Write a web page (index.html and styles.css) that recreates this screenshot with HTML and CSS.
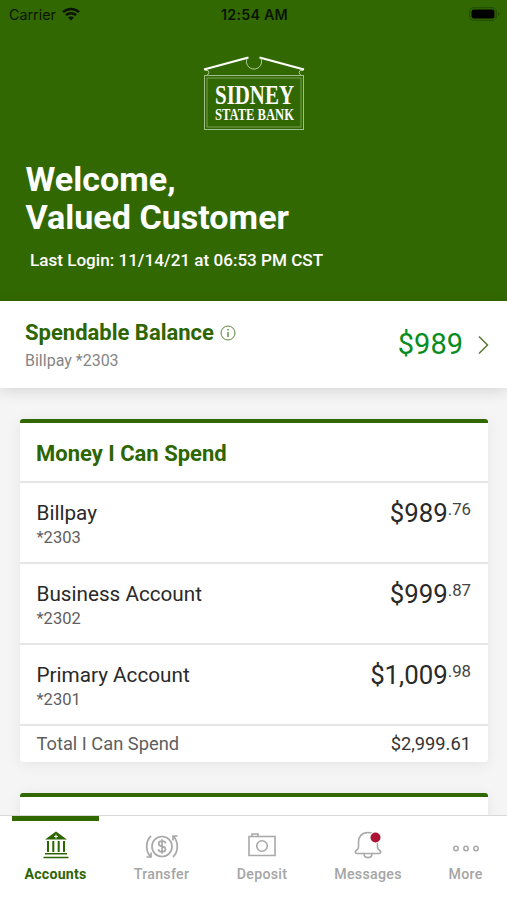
FILE: index.html
```html
<!DOCTYPE html>
<html lang="en">
<head>
<meta charset="utf-8">
<title>Sidney State Bank</title>
<link rel="stylesheet" href="styles.css">
</head>
<body>
<div class="app">
  <header class="hero">
    <div class="status">
      <div class="carrier"><span>Carrier</span>
        <svg width="18" height="14" viewBox="0 0 18 14" fill="none" stroke="#0b1400" stroke-width="2.500"><path d="M1 5.200C5.500 .9 12.500 .9 17 5.200M3.900 8.200C6.800 5.500 11.200 5.500 14.100 8.200"/><path d="M9 13.600 6.100 10.600C7.700 9.100 10.300 9.100 11.900 10.600Z" fill="#0b1400" stroke="none"/></svg>
      </div>
      <div class="time">12:54 AM</div>
      <svg class="battery" width="31" height="14" viewBox="0 0 31 14"><rect x=".7" y=".7" width="26.600" height="12.600" rx="4" fill="none" stroke="#255000" stroke-width="1.300"/><rect x="2.500" y="2.500" width="23" height="9" rx="2.500" fill="#000"/><path d="M29 5v4q1.500-.5 1.500-2t-1.500-2" fill="#255000"/></svg>
    </div>
    <svg class="logo" width="104" height="78" viewBox="0 0 104 78">
      <g fill="none" stroke="#fff">
        <path d="M2 15.500 46.500 3.500M57.500 3.500 102 15.500" stroke-width="2.200"/>
        <path d="M45 4.500A7.600 7.600 0 1 0 59 4.500M3 16.500h3q2 2-.5 4.500M101 16.500h-3q-2 2 .5 4.500" stroke="#b4cda0"/>
        <rect x="2.500" y="21.500" width="99" height="54" stroke="#a0be87"/>
        <rect x="5" y="24" width="94" height="49" stroke="#8aad6c" stroke-width=".8"/>
      </g>
      <g fill="#fff" font-family="Liberation Serif, serif" font-weight="700">
        <text x="13" y="49.500" font-size="27" textLength="79" lengthAdjust="spacingAndGlyphs">SIDNEY</text>
        <text x="13" y="66" font-size="16.500" textLength="79" lengthAdjust="spacingAndGlyphs">STATE BANK</text>
      </g>
    </svg>
    <h1>Welcome,<br>Valued Customer</h1>
    <p class="login">Last Login: 11/14/21 at 06:53 PM CST</p>
  </header>

  <section class="spendable">
    <div class="spend-info">
      <h2>Spendable Balance
        <svg width="16" height="16" viewBox="0 0 16 16" fill="none" stroke="#5c8738"><circle cx="8" cy="8" r="7"/><path d="M8 7v5M8 4v1.500" stroke-width="1.400"/></svg>
      </h2>
      <p>Billpay *2303</p>
    </div>
    <div class="spend-amount">$989</div>
    <svg class="chevron" width="11" height="20" viewBox="0 0 11 20" fill="none" stroke="#5a7832" stroke-width="1.500"><path d="M1 1.500 9.500 10 1 18.500"/></svg>
  </section>

  <main>
    <section class="card">
      <h2>Money I Can Spend</h2>
      <div class="row"><div><div class="name">Billpay</div><div class="num">*2303</div></div><div class="amount">$989<span>.76</span></div></div>
      <div class="row"><div><div class="name">Business Account</div><div class="num">*2302</div></div><div class="amount">$999<span>.87</span></div></div>
      <div class="row"><div><div class="name">Primary Account</div><div class="num">*2301</div></div><div class="amount">$1,009<span>.98</span></div></div>
      <div class="total"><span>Total I Can Spend</span><b>$2,999.61</b></div>
    </section>
    <section class="card next"></section>
  </main>

  <nav>
    <a class="tab accounts">
      <svg width="28" height="30" viewBox="0 0 28 30"><path d="M3 9.500 14 1.500 25 9.500Z" fill="#2d6500"/><path d="M14 4.500v4M12 6.500h4" stroke="#fff"/><path d="M6 11v11M11.300 11v11M16.700 11v11M22 11v11" stroke="#2d6500" stroke-width="2"/><path d="M3 23.700H25M1.500 27.500H26.500" stroke="#2d6500" stroke-width="1.600"/></svg>
      <span>Accounts</span></a>
    <a class="tab transfer">
      <svg width="34" height="30" viewBox="0 0 34 30" fill="none" stroke="#a8a8a8" stroke-width="1.700"><circle cx="17" cy="16.500" r="10"/><path d="M20.500 13.500C20.500 11.500 18.800 11.200 17 11.200C12.500 11.200 12.500 15.700 17 16.400C21.800 17.100 21.500 21.800 17 21.800C15 21.800 13.500 21 13.500 19.200M17 9.300v14.400"/><path d="M6 6C.5 11 .3 20.500 5.500 27M1.500 27H6V22.500M28 27C33.500 22 33.700 12.500 28.500 6M32.500 6H28V10.500"/></svg>
      <span>Transfer</span></a>
    <a class="tab deposit">
      <svg width="30" height="30" viewBox="0 0 30 30" fill="none" stroke="#a8a8a8" stroke-width="1.600"><path d="M2 6.500H28V25.500H2ZM5 6V4H11V6"/><circle cx="15" cy="16" r="5.300"/></svg>
      <span>Deposit</span></a>
    <a class="tab messages">
      <svg width="30" height="30" viewBox="0 0 30 30"><path d="M15 2.500C8.500 2.500 5.500 7 5.500 12V17Q5.500 19 3.300 20.500C1.400 22 2.300 23.500 4 23.500H26C27.700 23.500 28.600 22 26.700 20.500Q24.500 19 24.500 17V12C24.500 7 21.500 2.500 15 2.500ZM11 23.500C11 29 19 29 19 23.500" fill="none" stroke="#a8a8a8" stroke-width="1.600"/><circle cx="22.500" cy="7.500" r="6" fill="#fff"/><circle cx="22.500" cy="7.500" r="5" fill="#ab1233"/></svg>
      <span>Messages</span></a>
    <a class="tab more">
      <svg width="28" height="30" viewBox="0 0 28 30" fill="none" stroke="#a8a8a8" stroke-width="1.500"><circle cx="4" cy="18.500" r="2.200"/><circle cx="14" cy="18.500" r="2.200"/><circle cx="24" cy="18.500" r="2.200"/></svg>
      <span>More</span></a>
  </nav>
</div>
</body>
</html>
```
FILE: styles.css
```css
* { box-sizing: border-box; margin: 0; padding: 0; }
body { font-family: Roboto, sans-serif; background: #f5f5f5; color: #292929; }
svg { display: block; flex: none; }
.app { height: 900px; overflow: hidden; display: flex; flex-direction: column; }
.hero { height: 301px; background: #326801; color: #fff; flex: none; }
.status { height: 28px; display: grid; grid-template-columns: 1fr auto 1fr; align-items: center; padding: 0 7px 0 9px; color: #0b1400; font: 14.3px Inter, sans-serif; }
.carrier { display: flex; align-items: center; gap: 6px; }
.time { font-weight: 600; letter-spacing: .2px; }
.battery { justify-self: end; }
.logo { margin: 26px auto 0 202px; overflow: visible; }
h1 { margin: 28px 0 0 25.500px; font-size: 34.1px; line-height: 38px; font-weight: 700; }
.login { margin: 14px 0 0 30px; font-size: 17.1px; line-height: 20px; font-weight: 500; }
.spendable { position: relative; height: 87px; flex: none; background: #fff; display: flex; align-items: center; padding: 0 18px 0 25px; box-shadow: 0 3px 14px rgba(0,0,0,.13); }
.spend-info { flex: 1; }
h2 { color: #2d6500; font-size: 22px; font-weight: 700; display: flex; align-items: center; gap: 6px; line-height: 28px; }
.spend-info h2 { padding-top: 1px; }
.spend-info p { color: #858585; font-size: 16px; line-height: 20px; margin-top: 4px; }
.spend-amount { color: #078c20; font-size: 29px; line-height: 34px; padding-bottom: 1px; }
.chevron { margin-left: 15px; }
main { flex: 1; min-height: 0; overflow: hidden; padding: 31px 19px 0 20px; }
.card { height: 343px; background: #fff; border-top: 4px solid #326801; border-radius: 3px; box-shadow: 0 2px 14px rgba(0,0,0,.07); }
.card h2 { height: 58px; padding: 3px 16px 0; }
.row { height: 81px; border-top: 2px solid #e5e5e5; padding: 16px 17px 0 16.500px; display: flex; justify-content: space-between; }
.name { font-size: 20.700px; line-height: 29px; }
.num { font-size: 16.500px; line-height: 22px; color: #606060; margin-top: -1px; }
.amount { font-size: 25.800px; line-height: 29px; display: flex; }
.amount span { font-size: 16.800px; line-height: 20px; color: #444; }
.total { height: 38px; border-top: 2px solid #e5e5e5; padding: 0 17px 1px 16.500px; display: flex; justify-content: space-between; align-items: center; font-size: 18.300px; color: #5e5e5e; }
.total b { font-weight: 400; color: #333; }
.next { margin-top: 31px; }
nav { position: relative; height: 85px; flex: none; background: #fff; border-top: 1px solid #d9d9d9; display: flex; gap: 22.500px; padding-left: 12px; }
.tab { display: flex; flex-direction: column; align-items: center; border-top: 5px solid transparent; padding-top: 9px; color: #a5a5a5; font-size: 14.200px; font-weight: 500; line-height: 20px; letter-spacing: .3px; }
.tab span { margin-top: 4px; }
.accounts { width: 87px; border-color: #326801; color: #2d6500; font-weight: 700; font-size: 14.200px; letter-spacing: .2px; }
.transfer { width: 80px; }
.deposit { width: 76px; }
.messages { width: 91px; }
.more { width: 59px; }
```
